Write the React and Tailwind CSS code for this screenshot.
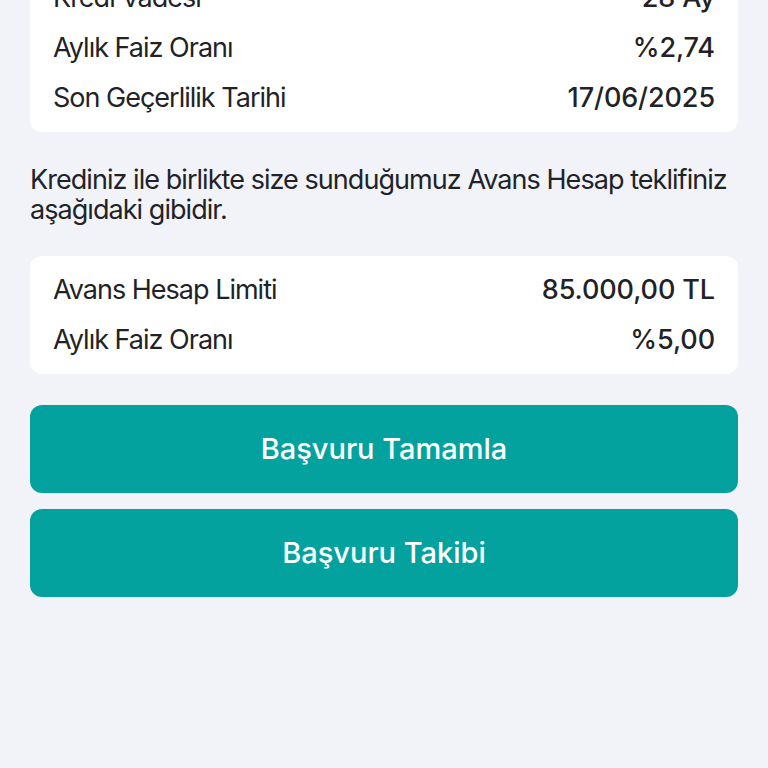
import React from 'react';

const kredi = [
  { label: 'Kredi Vadesi', value: '28 Ay' },
  { label: 'Aylık Faiz Oranı', value: '%2,74' },
  { label: 'Son Geçerlilik Tarihi', value: '17/06/2025' },
];

const avans = [
  { label: 'Avans Hesap Limiti', value: '85.000,00 TL' },
  { label: 'Aylık Faiz Oranı', value: '%5,00' },
];

function InfoCard({ rows }) {
  return (
    <div className="bg-white rounded-xl px-[23px] py-[9px]">
      {rows.map((r) => (
        <div key={r.label} className="h-[50px] flex items-center justify-between">
          <span className="text-[#1f2328] tracking-[-1px]">{r.label}</span>
          <span className="text-[#1f2328] font-medium tracking-[-0.1px]">{r.value}</span>
        </div>
      ))}
    </div>
  );
}

export default function App() {
  return (
    <div
      className="min-h-screen bg-[#f1f3f8] overflow-hidden text-[27px]"
      style={{ fontFamily: 'Inter, "Noto Sans", sans-serif' }}
    >
      <div className="px-[30px] -mt-[36px]">
        <InfoCard rows={kredi} />

        <p className="mt-[33px] leading-[30px] text-[#1f2328] tracking-[-0.95px] -mr-[6px]">
          Krediniz ile birlikte size sunduğumuz Avans Hesap teklifiniz aşağıdaki gibidir.
        </p>

        <div className="mt-[31px]">
          <InfoCard rows={avans} />
        </div>

        <div className="mt-[31px] flex flex-col gap-4">
          <button className="h-[88px] w-full rounded-xl bg-[#04a29f] text-white text-[29px] font-medium">
            Başvuru Tamamla
          </button>
          <button className="h-[88px] w-full rounded-xl bg-[#04a29f] text-white text-[29px] font-medium">
            Başvuru Takibi
          </button>
        </div>
      </div>
    </div>
  );
}
